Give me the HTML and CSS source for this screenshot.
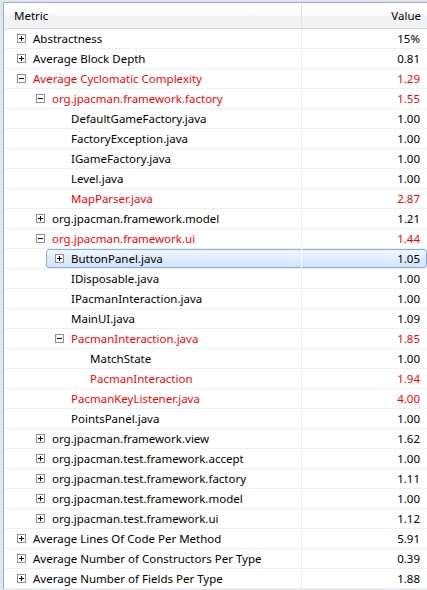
FILE: index.html
```html
<!DOCTYPE html>
<html>
<head>
<meta charset="utf-8">
<link rel="stylesheet" href="styles.css">
</head>
<body>
<div class="view">
  <div class="header">
    <div class="h-metric">Metric</div>
    <div class="h-value">Value</div>
  </div>
  <div class="tree">
    <div class="row l0"><div class="name"><span class="exp plus"></span><span>Abstractness</span></div><div class="val">15%</div></div>
    <div class="row l0"><div class="name"><span class="exp plus"></span><span>Average Block Depth</span></div><div class="val">0.81</div></div>
    <div class="row l0 red"><div class="name"><span class="exp minus"></span><span>Average Cyclomatic Complexity</span></div><div class="val">1.29</div></div>
    <div class="row l1 red"><div class="name"><span class="exp minus"></span><span>org.jpacman.framework.factory</span></div><div class="val">1.55</div></div>
    <div class="row l2"><div class="name"><span class="exp"></span><span>DefaultGameFactory.java</span></div><div class="val">1.00</div></div>
    <div class="row l2"><div class="name"><span class="exp"></span><span>FactoryException.java</span></div><div class="val">1.00</div></div>
    <div class="row l2"><div class="name"><span class="exp"></span><span>IGameFactory.java</span></div><div class="val">1.00</div></div>
    <div class="row l2"><div class="name"><span class="exp"></span><span>Level.java</span></div><div class="val">1.00</div></div>
    <div class="row l2 red"><div class="name"><span class="exp"></span><span>MapParser.java</span></div><div class="val">2.87</div></div>
    <div class="row l1"><div class="name"><span class="exp plus"></span><span>org.jpacman.framework.model</span></div><div class="val">1.21</div></div>
    <div class="row l1 red"><div class="name"><span class="exp minus"></span><span>org.jpacman.framework.ui</span></div><div class="val">1.44</div></div>
    <div class="row l2 selected"><div class="name"><span class="exp plus"></span><span>ButtonPanel.java</span></div><div class="val">1.05</div></div>
    <div class="row l2"><div class="name"><span class="exp"></span><span>IDisposable.java</span></div><div class="val">1.00</div></div>
    <div class="row l2"><div class="name"><span class="exp"></span><span>IPacmanInteraction.java</span></div><div class="val">1.00</div></div>
    <div class="row l2"><div class="name"><span class="exp"></span><span>MainUI.java</span></div><div class="val">1.09</div></div>
    <div class="row l2 red"><div class="name"><span class="exp minus"></span><span>PacmanInteraction.java</span></div><div class="val">1.85</div></div>
    <div class="row l3"><div class="name"><span class="exp"></span><span>MatchState</span></div><div class="val">1.00</div></div>
    <div class="row l3 red"><div class="name"><span class="exp"></span><span>PacmanInteraction</span></div><div class="val">1.94</div></div>
    <div class="row l2 red"><div class="name"><span class="exp"></span><span>PacmanKeyListener.java</span></div><div class="val">4.00</div></div>
    <div class="row l2"><div class="name"><span class="exp"></span><span>PointsPanel.java</span></div><div class="val">1.00</div></div>
    <div class="row l1"><div class="name"><span class="exp plus"></span><span>org.jpacman.framework.view</span></div><div class="val">1.62</div></div>
    <div class="row l1"><div class="name"><span class="exp plus"></span><span>org.jpacman.test.framework.accept</span></div><div class="val">1.00</div></div>
    <div class="row l1"><div class="name"><span class="exp plus"></span><span>org.jpacman.test.framework.factory</span></div><div class="val">1.11</div></div>
    <div class="row l1"><div class="name"><span class="exp plus"></span><span>org.jpacman.test.framework.model</span></div><div class="val">1.00</div></div>
    <div class="row l1"><div class="name"><span class="exp plus"></span><span>org.jpacman.test.framework.ui</span></div><div class="val">1.12</div></div>
    <div class="row l0"><div class="name"><span class="exp plus"></span><span>Average Lines Of Code Per Method</span></div><div class="val">5.91</div></div>
    <div class="row l0"><div class="name"><span class="exp plus"></span><span>Average Number of Constructors Per Type</span></div><div class="val">0.39</div></div>
    <div class="row l0"><div class="name"><span class="exp plus"></span><span>Average Number of Fields Per Type</span></div><div class="val">1.88</div></div>
  </div>
</div>
</body>
</html>
```

FILE: styles.css
```css
html, body {
  margin: 0;
  padding: 0;
}
* {
  box-sizing: border-box;
}
body {
  background: #dfe6f1;
  font-family: "Noto Sans", "Open Sans", sans-serif;
  font-size: 11.5px;
  color: #000;
  width: 427px;
  height: 590px;
  overflow: hidden;
}
.view {
  margin: 2px 0 0 3px;
  border-top: 1px solid #a3aab4;
  border-left: 1px solid #a3aab4;
  background: #fff;
  height: 587px;
  overflow: hidden;
}
.header {
  display: flex;
  height: 26px;
  border-bottom: 1px solid #d5d5d5;
  background: linear-gradient(#ffffff 0%, #fbfbfc 45%, #f1f2f4 55%, #f3f4f5 100%);
}
.h-metric {
  width: 298px;
  padding-left: 10px;
  line-height: 25px;
  border-right: 1px solid #e3e3e3;
}
.h-value {
  flex: 1;
  text-align: right;
  padding-right: 6px;
  line-height: 25px;
}
.row {
  position: relative;
  display: flex;
  height: 20px;
  border-bottom: 1px solid #f0f0f0;
  line-height: 19px;
  white-space: nowrap;
}
.row .name {
  position: relative;
  width: 298px;
  border-right: 1px solid #f0f0f0;
  display: flex;
  align-items: center;
  overflow: hidden;
}
.row .val {
  position: relative;
  flex: 1;
  text-align: right;
  padding-right: 7px;
}
.l0 .name { padding-left: 13px; }
.l1 .name { padding-left: 32px; }
.l2 .name { padding-left: 51px; }
.l3 .name { padding-left: 70px; }
.red { color: #ff0000; }
.exp {
  flex: none;
  width: 9px;
  height: 9px;
  margin-right: 7px;
  position: relative;
}
.exp.plus, .exp.minus {
  border: 1px solid #919191;
  background: #fff;
}
.exp.plus::before, .exp.minus::before {
  content: "";
  position: absolute;
  left: 1px;
  top: 3px;
  width: 5px;
  height: 1px;
  background: #000;
}
.exp.plus::after {
  content: "";
  position: absolute;
  left: 3px;
  top: 1px;
  width: 1px;
  height: 5px;
  background: #000;
}
.selected::before {
  content: "";
  position: absolute;
  left: 42px;
  right: 0;
  top: 0;
  bottom: 0;
  border: 1px solid #84acdd;
  border-radius: 3px;
  background: linear-gradient(#eef5fe, #d1e4fb);
}
.selected .name { border-right-color: #f4f8fe; }
```
